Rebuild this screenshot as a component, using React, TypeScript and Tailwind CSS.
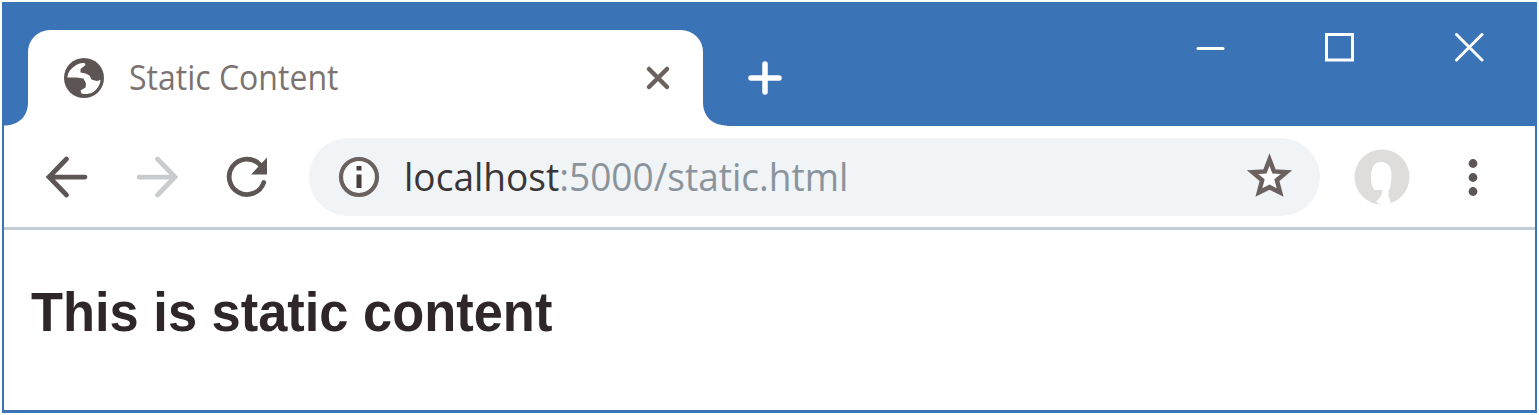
import type { ReactNode } from "react";

const ink = "#6b6260";

function Globe() {
  return (
    <svg className="h-[42px] w-[42px] shrink-0" viewBox="-21 -21 42 42">
      <circle r="20" fill="#5c5553" />
      <path
        d="M-10.5 -11C-7 -14 -3 -15.5 0.5 -15L1.5 -13L-3.5 -9V-5.5L1.5 -4.5L5.5 -2.5L7.5 1.5L12.5 3L16.5 2C16 7.5 12.5 12 8.5 14.5C5 16 1 16.5 -2.5 15.5L-3.5 12.5L1.5 9.5L2 5.5L-0.5 0.5L-7.5 -0.5H-16.5C-16.5 -4.5 -14 -8.5 -10.5 -11Z"
        fill="#fff"
      />
    </svg>
  );
}

function IconBox({ className, children }: { className: string; children: ReactNode }) {
  return (
    <svg className={className} viewBox="0 0 24 24" fill="none" strokeLinecap="round">
      {children}
    </svg>
  );
}

function TitleBar() {
  return (
    <header className="flex h-[123px] items-start bg-[#3a73b6]">
      <div className="flex h-[123px] w-6 shrink-0 items-end">
        <svg className="h-[24px] w-[24px]" viewBox="0 0 24 24">
          <path d="M24 0V24H0V23.500C13 23.500 24 16 24 0Z" fill="#fff" />
        </svg>
      </div>
      <div className="mt-[27px] flex h-24 w-[675px] shrink-0 items-center rounded-t-[22px] bg-white pl-[35px] pr-[32px]">
        <Globe />
        <div className="ml-[24px] flex-1 pb-[3px]">
          <span className="inline-block origin-left scale-x-[0.915] whitespace-nowrap font-['Open_Sans',sans-serif] text-[35px] leading-[48px] text-[#7b7371]">
            Static Content
          </span>
        </div>
        <svg className="h-[26px] w-[26px]" viewBox="0 0 26 26" stroke={ink} strokeWidth="4.500" strokeLinecap="round">
          <path d="M4 4L22 22M22 4L4 22" />
        </svg>
      </div>
      <div className="flex h-[123px] w-6 shrink-0 items-end">
        <svg className="h-[24px] w-[24px]" viewBox="0 0 24 24">
          <path d="M0 0V24H24V23.500C10 23.500 0 15 0 0Z" fill="#fff" />
        </svg>
      </div>
      <svg className="ml-[20px] mt-[57px] h-9 w-9" viewBox="0 0 36 36" stroke="#fff" strokeWidth="5.500" strokeLinecap="round">
        <path d="M18 4V32M4 18H32" />
      </svg>
      <div className="ml-auto mr-[51px] mt-[28px] flex gap-[97px]">
        <svg className="h-8 w-8" viewBox="0 0 32 32" stroke="#fff" strokeWidth="3" strokeLinecap="round">
          <path d="M4 17.500H29" />
        </svg>
        <svg className="h-8 w-8" viewBox="0 0 32 32" stroke="#fff" strokeWidth="3" fill="none">
          <path d="M3.500 3.500H29.500V29H3.500Z" />
        </svg>
        <svg className="h-8 w-8" viewBox="0 0 32 32" stroke="#fff" strokeWidth="3" strokeLinecap="round">
          <path d="M4.500 3.500L30 29M30 3.500L4.500 29" />
        </svg>
      </div>
    </header>
  );
}

function Toolbar() {
  return (
    <nav className="flex h-[101px] items-center bg-white pl-[33px]">
      <IconBox className="h-[60px] w-[60px] shrink-0">
        <path d="M19.200 12H5.600M11.800 4.800L4.800 12L11.800 19.200" stroke="#5d5654" strokeWidth="1.900" />
      </IconBox>
      <IconBox className="ml-[30px] h-[60px] w-[60px] shrink-0">
        <path d="M4.800 12H18.400M12.200 4.800L19.200 12L12.200 19.200" stroke="#c9cccf" strokeWidth="1.900" />
      </IconBox>
      <IconBox className="ml-[30px] h-[60px] w-[60px] shrink-0">
        <path d="M17.200 7.100A7.100 7.100 0 1 0 18.700 14.200" stroke="#5d5654" strokeWidth="1.900" />
        <path d="M20 4.200V11H13.600Z" fill="#5d5654" />
      </IconBox>
      <div className="ml-[32px] flex h-[78px] w-[1011px] shrink-0 items-center rounded-full bg-[#f0f4f6] pl-[26px] pr-[26px]">
        <svg className="h-12 w-12 shrink-0" viewBox="0 0 48 48">
          <circle cx="24" cy="24" r="18" fill="#fafbfb" stroke={ink} strokeWidth="4.200" />
          <path d="M21.500 13H26.500V17.500H21.500ZM21.500 21.500H26.500V35H21.500Z" fill="#463f3e" />
        </svg>
        <div className="ml-[21px] flex-1 pb-[2px]">
          <span className="inline-block origin-left scale-x-[0.975] whitespace-nowrap font-['Open_Sans',sans-serif] text-[38px] leading-[52px] text-[#8b939b]">
            <span className="text-[#3a3536]">localhost</span>:5000/static.html
          </span>
        </div>
        <svg className="h-[49px] w-[49px]" viewBox="0 0 24 24">
          <path
            d="M12 3.700L14.200 9.500L20.300 9.900L15.600 13.800L17.200 19.800L12 17.200L6.800 19.800L8.400 13.800L3.700 9.900L9.800 9.500Z"
            fill="#fff"
            stroke={ink}
            strokeWidth="2.200"
          />
        </svg>
      </div>
      <svg className="ml-[34px] h-14 w-14 shrink-0" viewBox="0 0 56 56">
        <circle cx="28" cy="28" r="27.500" fill="#dedddc" />
        <path
          d="M27 13C20 13 17 19 17 28C17 34 18 38.500 21 41H28.500L27 47L22 53L30 57L37 54L34.500 47V42C37 38 37.500 32 37.500 26C37.500 18 34 13 27 13Z"
          fill="#fff"
        />
      </svg>
      <svg className="ml-[53px] h-10 w-5 shrink-0" viewBox="0 0 20 40" fill="#5d5654">
        <circle cx="10" cy="6.500" r="4.400" />
        <circle cx="10" cy="20.500" r="4.400" />
        <circle cx="10" cy="34.500" r="4.400" />
      </svg>
    </nav>
  );
}

export default function App() {
  return (
    <div className="h-[415px] w-[1539px] overflow-hidden bg-white p-[2px]">
      <div className="flex h-[411px] w-[1535px] flex-col border-x-2 border-b-[3px] border-t border-[#3a73b6] bg-white">
        <TitleBar />
        <Toolbar />
        <main className="flex-1 border-t-[3px] border-[#c3cdd6] pl-[27px] pt-[50px]">
          <h1 className="inline-block origin-left scale-x-[0.936] whitespace-nowrap font-['Liberation_Sans',sans-serif] text-[56px] font-bold leading-[64px] text-[#2e2629]">
            This is static content
          </h1>
        </main>
      </div>
    </div>
  );
}
